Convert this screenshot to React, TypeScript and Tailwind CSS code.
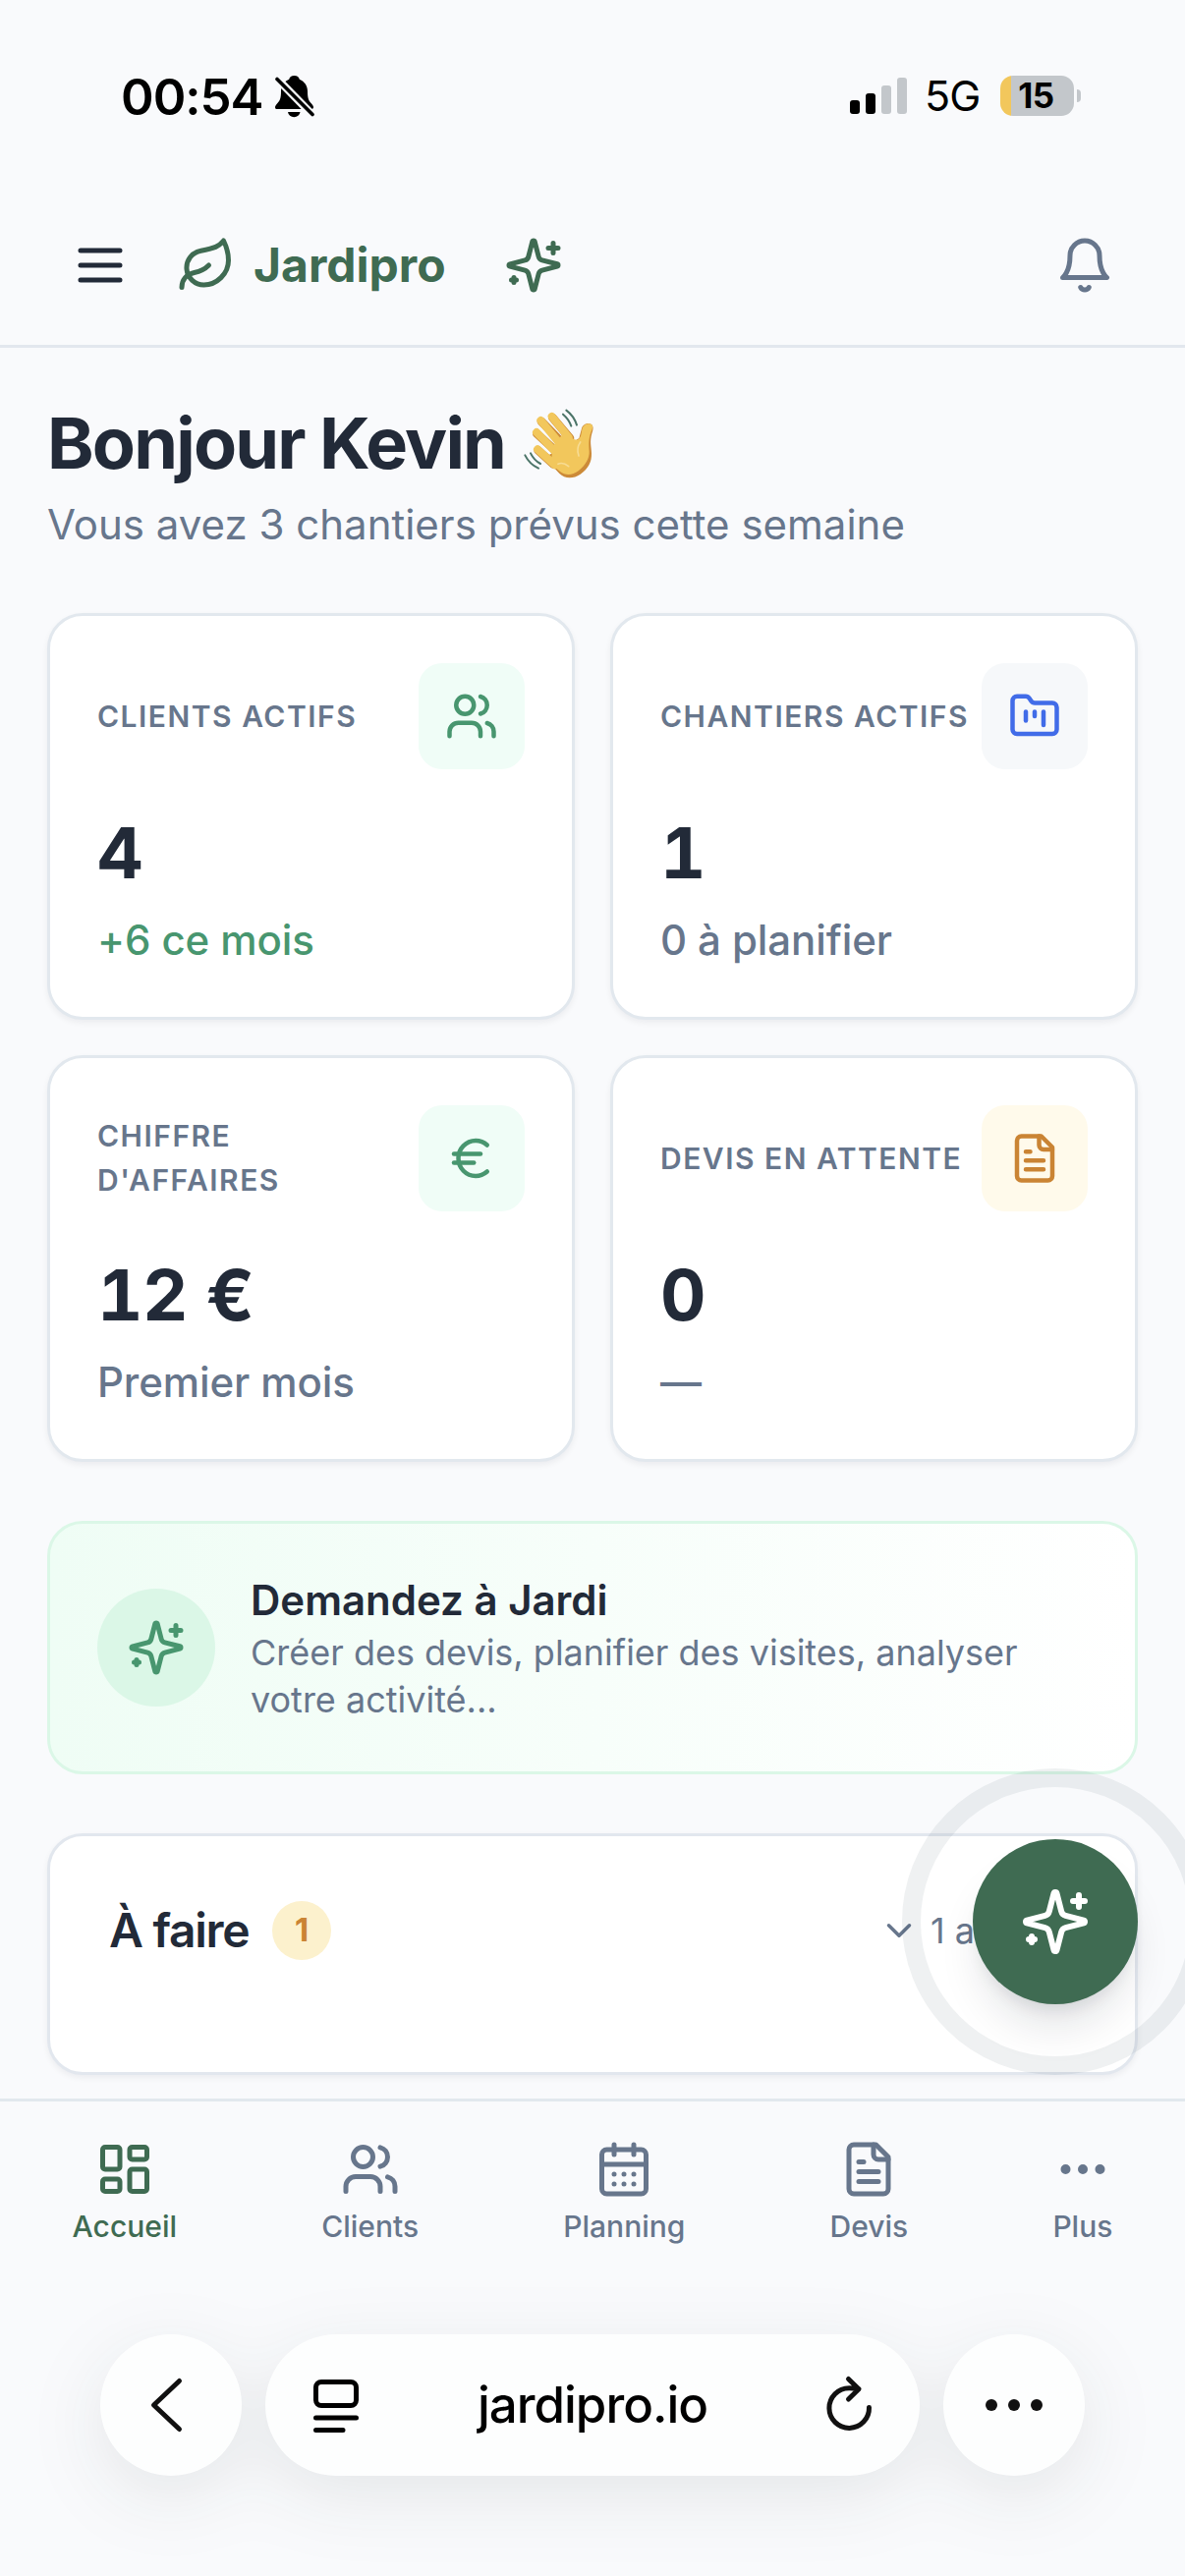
import type { ReactNode } from "react";
import {
  CalendarDays,
  ChevronDown,
  Ellipsis,
  Euro,
  FolderKanban,
  LayoutDashboard,
  Leaf,
  Users,
} from "lucide-react";

type IconProps = { className?: string };

function Stroke({ className, children }: IconProps & { children: ReactNode }) {
  return (
    <svg
      viewBox="0 0 24 24"
      fill="none"
      stroke="currentColor"
      strokeWidth={2}
      strokeLinecap="round"
      strokeLinejoin="round"
      className={className}
    >
      {children}
    </svg>
  );
}

function MenuIcon({ className }: IconProps) {
  return (
    <Stroke className={className}>
      <path d="M4 6h16M4 12h16M4 18h16" />
    </Stroke>
  );
}

function SparklesIcon({ className }: IconProps) {
  return (
    <Stroke className={className}>
      <path d="M9.937 15.5A2 2 0 0 0 8.5 14.063l-6.135-1.582a.5.5 0 0 1 0-.962L8.5 9.936A2 2 0 0 0 9.937 8.5l1.582-6.135a.5.5 0 0 1 .963 0L14.063 8.5A2 2 0 0 0 15.5 9.937l6.135 1.581a.5.5 0 0 1 0 .964L15.5 14.063a2 2 0 0 0-1.437 1.437l-1.582 6.135a.5.5 0 0 1-.963 0z" />
      <path d="M20 3v4M22 5h-4M4 17v2M5 18H3" />
    </Stroke>
  );
}

function BellIcon({ className }: IconProps) {
  return (
    <Stroke className={className}>
      <path d="M6 8a6 6 0 0 1 12 0c0 7 3 9 3 9H3s3-2 3-9" />
      <path d="M10.3 21a1.94 1.94 0 0 0 3.4 0" />
    </Stroke>
  );
}

function FileIcon({ className }: IconProps) {
  return (
    <Stroke className={className}>
      <path d="M15 2H6a2 2 0 0 0-2 2v16a2 2 0 0 0 2 2h12a2 2 0 0 0 2-2V7Z" />
      <path d="M14 2v4a2 2 0 0 0 2 2h4M10 9H8M16 13H8M16 17H8" />
    </Stroke>
  );
}

function SilentIcon() {
  return (
    <svg viewBox="0 0 40 43" className="h-[43px] w-[40px]">
      <path
        d="M19.5 0c-3 0-4.8 1.7-5.3 3.8C9 6 6 10.5 6 16c0 8-1.5 10-4 12.5C.8 30 0 31 0 32.2 0 33.5.8 34 2.2 34h34.5c1.4 0 2.3-.6 2.3-1.8 0-1.2-.8-2.2-2-3.7-2.5-2.5-4-4.5-4-12.5 0-5.5-3-10-8.2-12.2C24.3 1.7 22.5 0 19.5 0z"
        fill="#000"
      />
      <path d="M13 37h12.5a6.3 6 0 0 1-12.5 0z" fill="#000" />
      <path d="M0 1l40 41" stroke="#f9fafc" strokeWidth={8} />
      <path d="M2 3.5l36 36" stroke="#000" strokeWidth={3.6} strokeLinecap="round" />
    </svg>
  );
}

function WavingHand() {
  return (
    <svg
      viewBox="0 -3 288 288"
      className="size-24"
      fill="none"
      strokeLinecap="round"
      strokeLinejoin="round"
    >
      {/* darker rim under the fingers and palm */}
      <g stroke="#cc8a38" strokeWidth={26}>
        <path d="M127 63L180 126M93 75L158 142M79 112L142 170M83 163L130 206" />
      </g>
      <path
        d="M90 172L148 234C164 250 190 251 212 236C236 219 247 200 246 172C245 148 240 138 247 112C252 98 252 90 246 84C234 76 219 84 216 96L208 126L170 150L110 180Z"
        fill="#cc8a38"
      />
      <g stroke="#f2c75c" strokeWidth={24}>
        <path d="M125 60L176 124M91 72L152 146M78 108L138 170M81 160L134 208" />
      </g>
      <path
        d="M122 205L150 228C166 241 188 240 206 226C228 209 240 188 239 166C238 146 236 134 244 108C252 92 250 86 244 83C233 78 221 86 218 96C214 110 216 120 207 129C202 133 194 131 188 127L166 104L128 150Z"
        fill="#f2c75c"
      />
      <path d="M212 138C202 152 202 166 207 180" stroke="#f7dc93" strokeWidth={5} />
      <path d="M144 205C154 200 166 204 176 212" stroke="#f7dc93" strokeWidth={5} />
      <g stroke="#4b7468" strokeWidth={6}>
        <path d="M169 41C184 52 195 67 201 86M159 53C171 63 179 75 184 89" />
        <path d="M43 178C52 196 65 209 84 218M60 172C67 186 77 197 90 204" />
      </g>
    </svg>
  );
}

const stats = [
  {
    label: "Clients actifs",
    value: "4",
    note: "+6 ce mois",
    noteClass: "text-[#48966f]",
    tile: "bg-[#f0fdf7] text-[#48966f]",
    icon: <Users className="size-[54px]" />,
  },
  {
    label: "Chantiers actifs",
    value: "1",
    note: "0 à planifier",
    noteClass: "text-[#67768c]",
    tile: "bg-[#f6f8fa] text-[#416ce8]",
    icon: <FolderKanban className="size-[54px]" />,
  },
  {
    label: "Chiffre d'affaires",
    value: "12 €",
    note: "Premier mois",
    noteClass: "text-[#67768c]",
    tile: "bg-[#f0fdf7] text-[#48966f]",
    icon: <Euro className="size-[54px]" />,
  },
  {
    label: "Devis en attente",
    value: "0",
    note: "—",
    noteClass: "text-[#67768c]",
    tile: "bg-[#fffaeb] text-[#ca8434]",
    icon: <FileIcon className="size-[54px]" />,
  },
];

const tabs = [
  { label: "Accueil", icon: <LayoutDashboard className="size-[60px]" />, active: true },
  { label: "Clients", icon: <Users className="size-[60px]" /> },
  { label: "Planning", icon: <CalendarDays className="size-[60px]" /> },
  { label: "Devis", icon: <FileIcon className="size-[60px]" /> },
  { label: "Plus", icon: <Ellipsis className="size-[60px]" /> },
];

function StatusBar() {
  return (
    <div className="flex h-[189px] shrink-0 items-start justify-between pt-[77px] pr-[106px] pl-[123px] text-black">
      <div className="flex h-[43px] items-center">
        <span className="w-[157px] text-[51px] leading-[43px] font-semibold tracking-[-1px]">
          00:54
        </span>
        <SilentIcon />
      </div>
      <div className="flex h-[41px] items-center">
        <div className="flex h-[37px] items-end gap-[6px]">
          <span className="h-[14px] w-[10px] rounded-[3px] bg-black" />
          <span className="h-[21px] w-[10px] rounded-[3px] bg-black" />
          <span className="h-[29px] w-[10px] rounded-[3px] bg-[#c3c7cb]" />
          <span className="h-[37px] w-[10px] rounded-[3px] bg-[#c3c7cb]" />
        </div>
        <span className="ml-[18px] w-[58px] text-[43px] leading-[43px] tracking-[-1px]">5G</span>
        <div className="ml-[19px] flex h-[41px] w-[75px] items-center justify-center rounded-[13px] bg-linear-to-r from-[#f2c75c] from-[11px] to-[#c3c7cb] to-[11px]">
          <span className="-ml-0.5 text-[35px] leading-[41px] font-bold tracking-[-0.5px]">15</span>
        </div>
        <span className="ml-[3px] h-[13px] w-[4px] rounded-r-full bg-[#c3c7cb]" />
      </div>
    </div>
  );
}

function Header() {
  return (
    <header className="flex h-[165px] shrink-0 items-center border-b-3 border-[#e2e7ee] px-[72px] text-[#3f6b52]">
      <MenuIcon className="size-[60px] text-[#222a38]" />
      <Leaf className="ml-[48px] size-[60px]" />
      <span className="ml-[18px] w-[195px] text-[48px] leading-[60px] font-bold">Jardipro</span>
      <SparklesIcon className="ml-[60px] size-[60px]" />
      <BellIcon className="ml-auto size-[60px] text-[#67768c]" />
    </header>
  );
}

function StatCard({ stat }: { stat: (typeof stats)[number] }) {
  return (
    <div className="flex h-[414px] flex-col rounded-[36px] border-3 border-[#e2e8ee] bg-white p-12 shadow-[0_3px_6px_rgba(15,23,42,0.06)]">
      <div className="flex items-center justify-between">
        <span className="text-[30px] leading-[45px] font-semibold tracking-[1.5px] text-[#67768c] uppercase">
          {stat.label}
        </span>
        <span
          className={`flex size-[108px] shrink-0 items-center justify-center rounded-3xl ${stat.tile}`}
        >
          {stat.icon}
        </span>
      </div>
      <span className="mt-9 text-[72px] leading-[98px] font-bold tracking-[-0.6px] text-[#222a38] tabular-nums">
        {stat.value}
      </span>
      <span
        className={`mt-2.5 text-[42px] leading-[60px] font-medium tracking-[-0.1px] ${stat.noteClass}`}
      >
        {stat.note}
      </span>
    </div>
  );
}

function AssistantButton() {
  return (
    <div className="absolute top-[1800px] left-[918px] flex size-[312px] items-center justify-center rounded-full border-[19px] border-[#183c46]/7">
      <button className="flex size-[168px] shrink-0 items-center justify-center rounded-full bg-[#3f6b52] text-white shadow-[0_30px_45px_-9px_rgba(15,23,42,0.12),0_12px_18px_-9px_rgba(15,23,42,0.12)]">
        <SparklesIcon className="size-[72px]" />
      </button>
    </div>
  );
}

function BrowserBar() {
  return (
    // one shadow for the whole group, so no pill shades its neighbour
    <div className="mt-[87px] flex gap-6 px-[102px] text-black drop-shadow-[0_20px_36px_rgba(20,28,30,0.09)]">
      <div className="flex h-[144px] w-[144px] items-center justify-center rounded-full bg-[#fdfefe]">
        <svg
          viewBox="0 0 60 60"
          className="size-[60px]"
          fill="none"
          stroke="#111"
          strokeWidth={5}
          strokeLinecap="round"
          strokeLinejoin="round"
        >
          <path d="M38.5 5.5L12.5 30L38.5 54.5" />
        </svg>
      </div>
      <div className="flex h-[144px] flex-1 items-center justify-between rounded-full bg-[#fdfefe] px-[49px]">
        <svg
          viewBox="0 0 46 54"
          className="h-[54px] w-[46px] overflow-visible"
          fill="none"
          stroke="#000"
          strokeWidth={5}
          strokeLinecap="round"
        >
          <rect x={2.5} y={3.5} width={41} height={24} rx={5.5} />
          <path d="M2.5 40H43.5M2.5 52.5H30" />
        </svg>
        <span className="text-[51px] leading-[62px] font-medium tracking-[-1px]">jardipro.io</span>
        <svg
          viewBox="0 0 46 54"
          className="h-[54px] w-[46px] overflow-visible"
          fill="none"
          stroke="#111"
          strokeWidth={5}
          strokeLinecap="round"
          strokeLinejoin="round"
        >
          <path d="M43.5 29.5A20.3 20.3 0 1 1 23.2 9.8C26.5 9.8 29.5 10.2 33 10.7M22.5 0.5L33 10.7L22.5 21" />
        </svg>
      </div>
      <div className="flex h-[144px] w-[144px] items-center justify-center gap-[11px] rounded-full bg-[#fdfefe]">
        <span className="size-3 rounded-full bg-[#111]" />
        <span className="size-3 rounded-full bg-[#111]" />
        <span className="size-3 rounded-full bg-[#111]" />
      </div>
    </div>
  );
}

export default function App() {
  return (
    <div className="relative flex h-[2622px] w-[1206px] flex-col overflow-hidden bg-[#f9fafc] font-['Inter',sans-serif]">
      <StatusBar />
      <Header />

      <main className="flex h-[1782px] shrink-0 flex-col px-12 pt-12">
        <h1 className="flex items-center text-[72px] leading-[98px] font-bold tracking-[-1.8px] text-[#222a38]">
          <span className="w-[472px] whitespace-nowrap">Bonjour Kevin</span>
          <WavingHand />
        </h1>
        <p className="mt-1 text-[42px] leading-[60px] text-[#67768c]">
          Vous avez 3 chantiers prévus cette semaine
        </p>

        <div className="mt-[60px] grid grid-cols-2 gap-9">
          {stats.map((s) => (
            <StatCard key={s.label} stat={s} />
          ))}
        </div>

        <div className="mt-[60px] flex items-center gap-9 rounded-[36px] border-3 border-[#dbf7e7] bg-linear-to-r from-[#effdf5] to-white p-12">
          <span className="flex size-[120px] shrink-0 items-center justify-center rounded-full bg-[#dbf7e7] text-[#48966f]">
            <SparklesIcon className="size-[60px]" />
          </span>
          <div className="flex flex-col">
            <span className="text-[42px] leading-[60px] font-semibold text-[#222a38]">
              Demandez à Jardi
            </span>
            <span className="-mt-px mb-px w-[820px] text-[36px] leading-[48px] text-[#67768c]">
              Créer des devis, planifier des visites, analyser votre activité...
            </span>
          </div>
        </div>

        <section className="mt-[60px] flex h-[246px] items-start justify-between rounded-[36px] border-3 border-[#e2e7ee] bg-white px-[60px] pt-[66px] shadow-[0_3px_6px_rgba(15,23,42,0.06)]">
          <div className="flex items-center gap-6">
            <h2 className="text-[48px] leading-[60px] font-semibold tracking-[-1.3px] text-[#222a38]">
              À faire
            </h2>
            <span className="flex size-[60px] items-center justify-center rounded-full bg-[#fcf1cd] text-[33px] font-bold text-[#ca8434]">
              1
            </span>
          </div>
          <div className="flex h-[60px] w-[201px] items-center gap-[11px] text-[36px] text-[#67768c]">
            <ChevronDown className="size-[42px]" />
            <span>1 autre</span>
          </div>
        </section>
      </main>

      <nav className="flex shrink-0 justify-around border-t-3 border-[#e2e8ee] pt-[39px]">
        {tabs.map((t) => (
          <div
            key={t.label}
            className={`flex flex-col items-center gap-1.5 ${t.active ? "text-[#3f6b52]" : "text-[#67768c]"}`}
          >
            {t.icon}
            <span className="text-[30px] leading-[45px] font-medium">{t.label}</span>
          </div>
        ))}
      </nav>

      <BrowserBar />
      <AssistantButton />
    </div>
  );
}
